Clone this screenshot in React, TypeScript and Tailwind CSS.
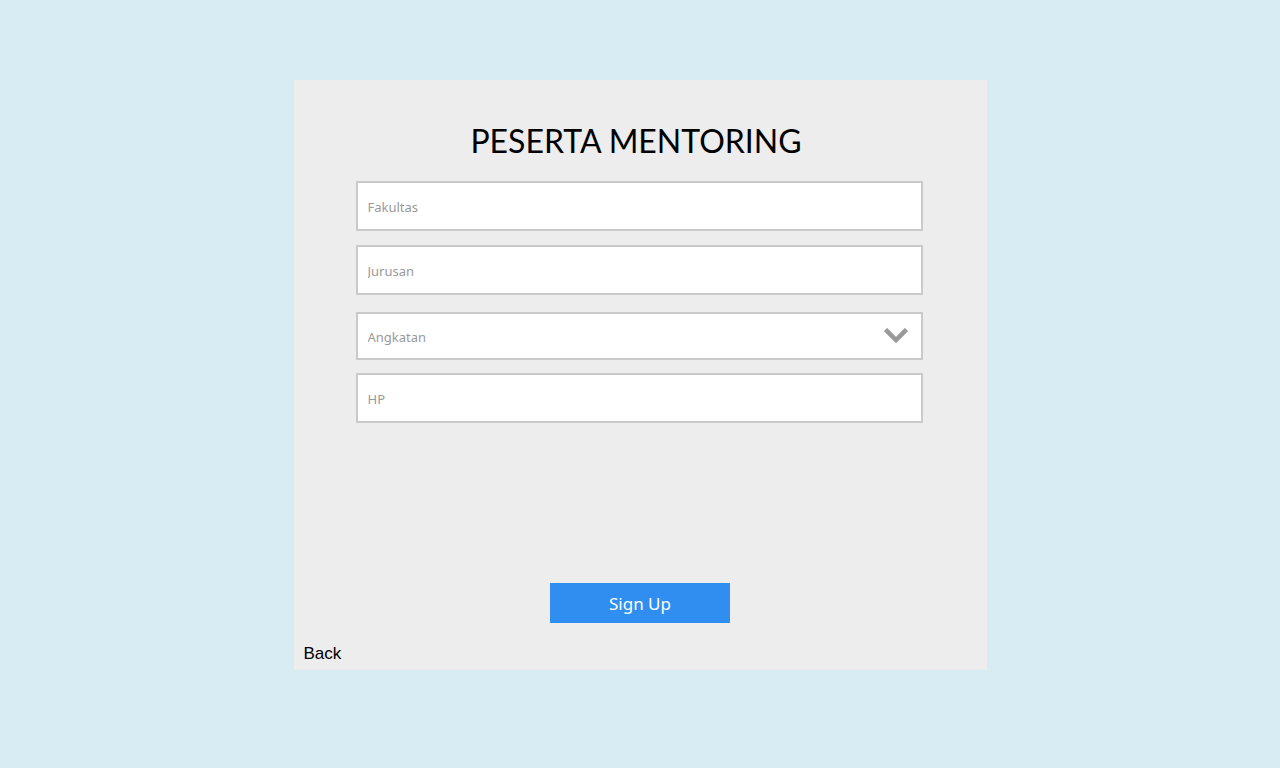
import React from 'react';

const field =
  "block w-full border-2 border-[#cacaca] bg-white px-2.5 font-['Noto_Sans',sans-serif] text-[13px] text-[#999999] placeholder:text-[#999999] placeholder:opacity-100 outline-none focus:border-[#2f8ef0]";

export default function App() {
  return (
    <div className="flex min-h-screen justify-center bg-[#d8ecf3] py-20">
      <main className="flex min-h-[590px] w-full max-w-[693px] flex-col self-start bg-[#ededed]">
        <form className="flex flex-1 flex-col pt-9" onSubmit={(e) => e.preventDefault()}>
          <h1 className="mb-4 pr-2 text-center font-['Lato',sans-serif] text-[32px] leading-[49px] text-black">
            PESERTA MENTORING
          </h1>
          <div className="flex flex-col pr-16 pl-[62px]">
            <input aria-label="Fakultas" placeholder="Fakultas" className={`${field} h-[50px] pt-0.5`} />
            <input aria-label="Jurusan" placeholder="Jurusan" className={`${field} mt-3.5 h-[50px] pt-0.5`} />
            <div className="relative mt-[17px]">
              <select aria-label="Angkatan" defaultValue="" className={`${field} h-12 appearance-none pt-1`}>
                <option value="">Angkatan</option>
                <option>2015</option>
                <option>2016</option>
                <option>2017</option>
              </select>
              <svg
                aria-hidden="true"
                viewBox="0 0 24 15"
                className="pointer-events-none absolute top-4 right-[15px] h-[15px] w-6"
              >
                <path d="M1.5 1.5 L12 12 L22.5 1.5" fill="none" stroke="#999999" strokeWidth="4.5" />
              </svg>
            </div>
            <input aria-label="HP" placeholder="HP" className={`${field} mt-[13px] h-[50px] pt-0.5`} />
          </div>
          <button
            type="submit"
            className="mt-auto h-10 w-[180px] cursor-pointer self-center bg-[#2f8ef0] pt-0.5 font-['Noto_Sans',sans-serif] text-[17px] text-white"
          >
            Sign Up
          </button>
        </form>
        <footer className="flex h-[47px] items-end px-2.5 pb-1">
          <a href="#back" className="font-['Liberation_Sans',sans-serif] text-[17px] leading-6 text-black">
            Back
          </a>
        </footer>
      </main>
    </div>
  );
}
